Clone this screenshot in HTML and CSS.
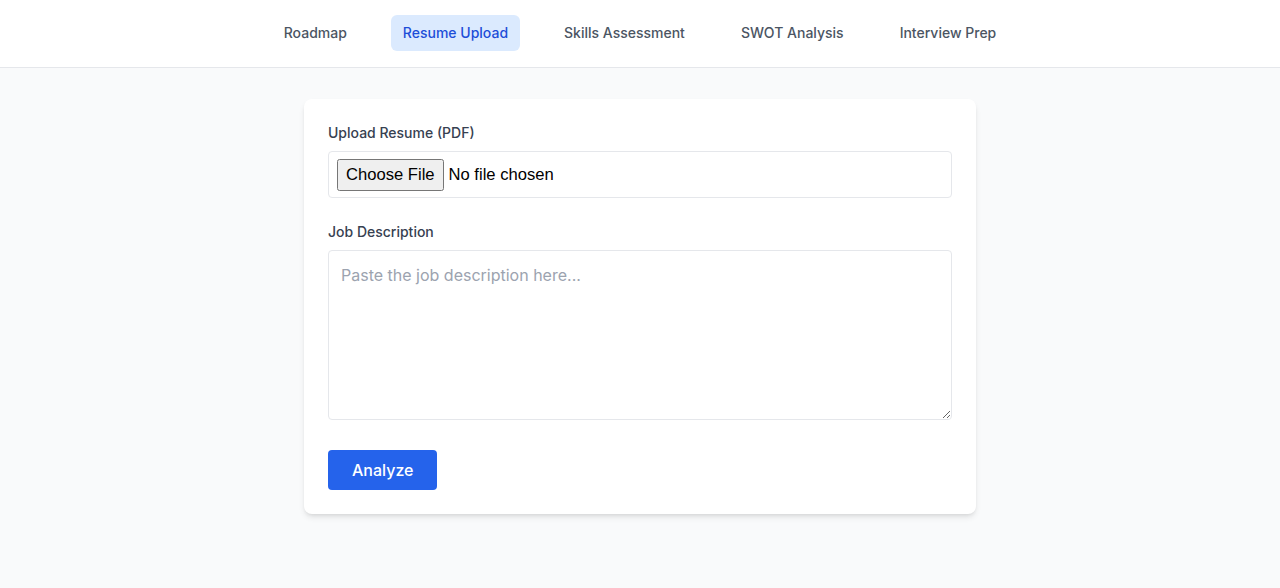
FILE: index.html
```html
<!DOCTYPE html>
<html lang="en">
<head>
<meta charset="utf-8">
<title>Resume Upload</title>
<link rel="stylesheet" href="styles.css">
</head>
<body>
<nav class="topnav">
  <div class="tabs">
    <a class="tab">Roadmap</a>
    <a class="tab active">Resume Upload</a>
    <a class="tab">Skills Assessment</a>
    <a class="tab">SWOT Analysis</a>
    <a class="tab">Interview Prep</a>
  </div>
</nav>
<main class="main">
  <form class="card">
    <div class="field">
      <label class="label" for="resume">Upload Resume (PDF)</label>
      <div class="filebox"><input id="resume" class="file" type="file" accept="application/pdf"></div>
    </div>
    <div class="field">
      <label class="label" for="jd">Job Description</label>
      <textarea id="jd" class="textarea" rows="6" placeholder="Paste the job description here..."></textarea>
    </div>
    <button type="button" class="btn">Analyze</button>
  </form>
</main>
</body>
</html>
```
FILE: styles.css
```css
* { box-sizing: border-box; }
html, body { margin: 0; padding: 0; }
body {
  background: #f9fafb;
  font-family: Inter, "Liberation Sans", sans-serif;
  color: #111827;
  height: 588px;
}
.topnav {
  background: #ffffff;
  border-bottom: 1px solid #e5e7eb;
  height: 68px;
  display: flex;
  align-items: center;
  justify-content: center;
}
.tabs {
  display: flex;
  gap: 32px;
  align-items: center;
  margin-top: -2px;
}
.tab {
  font-size: 14px;
  font-weight: 500;
  color: #4b5563;
  padding: 8px 12px;
  line-height: 20px;
  border-radius: 6px;
  cursor: pointer;
}
.tab.active {
  background: #dbeafe;
  color: #1d4ed8;
}
.main {
  display: flex;
  justify-content: center;
  padding-top: 31px;
}
.card {
  width: 672px;
  background: #ffffff;
  border-radius: 8px;
  box-shadow: 0 4px 6px -1px rgba(0,0,0,0.1), 0 2px 4px -2px rgba(0,0,0,0.1);
  padding: 24px;
}
.field { margin-bottom: 24px; }
.label {
  display: block;
  font-size: 14px;
  font-weight: 500;
  line-height: 20px;
  color: #374151;
  margin-bottom: 8px;
}
.filebox {
  border: 1px solid #e5e7eb;
  border-radius: 4px;
  padding: 8px;
  height: 47px;
  display: flex;
  align-items: center;
}
.file {
  font-family: "Liberation Sans", Arial, sans-serif;
  font-size: 16.6px;
  color: #000;
}
.file::file-selector-button {
  font-family: "Liberation Sans", Arial, sans-serif;
  font-size: 16.6px;
  padding: 4px 7px;
  margin-right: 5px;
}
.textarea {
  display: block;
  width: 100%;
  height: 170px;
  border: 1px solid #e5e7eb;
  border-radius: 4px;
  padding: 12px;
  font-family: Inter, "Liberation Sans", sans-serif;
  font-size: 16px;
  line-height: 24px;
  color: #111827;
  resize: vertical;
  margin-bottom: 30px;
}
.textarea::placeholder { color: #9ca3af; }
.field:nth-child(2) { margin-bottom: 0; }
.btn {
  display: block;
  background: #2563eb;
  color: #ffffff;
  border: none;
  border-radius: 4px;
  padding: 0 24px;
  height: 40px;
  font-family: Inter, "Liberation Sans", sans-serif;
  font-size: 16px;
  font-weight: 500;
  cursor: pointer;
}
```
